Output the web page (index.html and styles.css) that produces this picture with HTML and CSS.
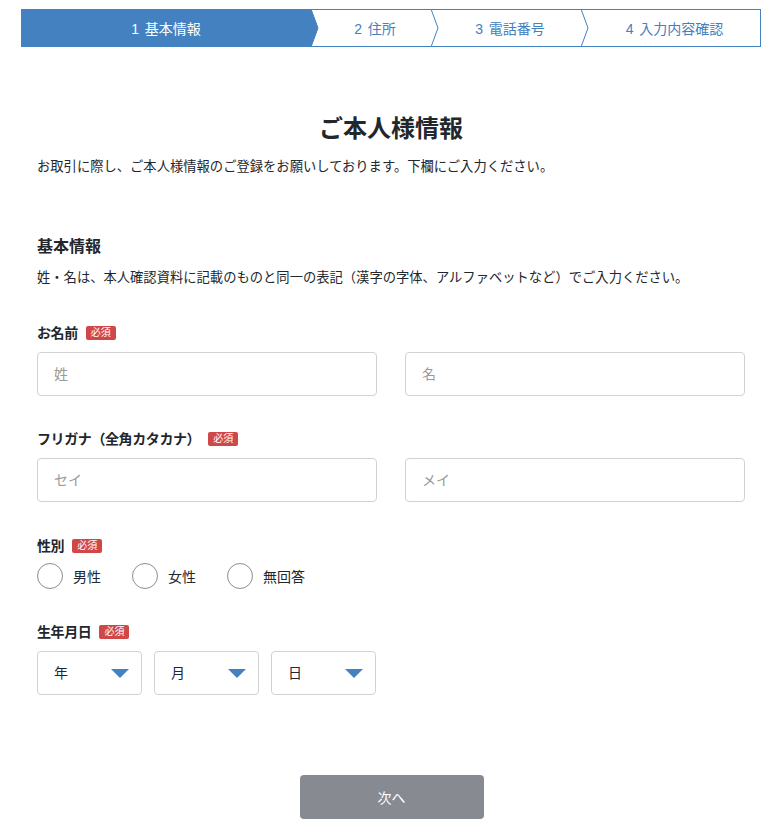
FILE: index.html
```html
<!DOCTYPE html>
<html lang="ja">
<head>
  <meta charset="UTF-8">
  <meta name="viewport" content="width=device-width, initial-scale=1.0">
  <title>ご本人様情報</title>
  <link rel="stylesheet" href="styles.css">
</head>
<body>
  <ol class="steps">
    <li class="step step-1 active">1 基本情報
      <svg class="chev" width="8" height="38" viewBox="0 0 8 38"><polygon points="0,0 7,19 0,38" fill="#4381c1"/><polyline points="0,0 7,19 0,38" fill="none" stroke="#4381c1" stroke-width="1"/></svg>
    </li>
    <li class="step step-2">2 住所
      <svg class="chev" width="8" height="38" viewBox="0 0 8 38"><polygon points="0,0 7,19 0,38" fill="#fff"/><polyline points="0,0 7,19 0,38" fill="none" stroke="#4381c1" stroke-width="1"/></svg>
    </li>
    <li class="step step-3">3 電話番号
      <svg class="chev" width="8" height="38" viewBox="0 0 8 38"><polygon points="0,0 7,19 0,38" fill="#fff"/><polyline points="0,0 7,19 0,38" fill="none" stroke="#4381c1" stroke-width="1"/></svg>
    </li>
    <li class="step step-4">4 入力内容確認</li>
  </ol>

  <form class="form">
    <h1 class="title">ご本人様情報</h1>
    <p class="lead">お取引に際し、ご本人様情報のご登録をお願いしております。下欄にご入力ください。</p>

    <h2 class="section">基本情報</h2>
    <p class="lead">姓・名は、本人確認資料に記載のものと同一の表記（漢字の字体、アルファベットなど）でご入力ください。</p>

    <div class="field">
      <label class="label">お名前 <span class="req">必須</span></label>
      <div class="pair">
        <input type="text" class="text" placeholder="姓">
        <input type="text" class="text" placeholder="名">
      </div>
    </div>

    <div class="field">
      <label class="label">フリガナ（全角カタカナ） <span class="req">必須</span></label>
      <div class="pair">
        <input type="text" class="text" placeholder="セイ">
        <input type="text" class="text" placeholder="メイ">
      </div>
    </div>

    <div class="field field-radio">
      <label class="label">性別 <span class="req">必須</span></label>
      <div class="radios">
        <label class="radio"><input type="radio" name="sex"><span class="dot"></span>男性</label>
        <label class="radio"><input type="radio" name="sex"><span class="dot"></span>女性</label>
        <label class="radio"><input type="radio" name="sex"><span class="dot"></span>無回答</label>
      </div>
    </div>

    <div class="field field-date">
      <label class="label">生年月日 <span class="req">必須</span></label>
      <div class="dates">
        <div class="sel">
          <select><option>年</option></select>
          <svg class="tri" width="18" height="9" viewBox="0 0 18 9"><polygon points="0,0 18,0 9,9" fill="#4381c1"/></svg>
        </div>
        <div class="sel">
          <select><option>月</option></select>
          <svg class="tri" width="18" height="9" viewBox="0 0 18 9"><polygon points="0,0 18,0 9,9" fill="#4381c1"/></svg>
        </div>
        <div class="sel">
          <select><option>日</option></select>
          <svg class="tri" width="18" height="9" viewBox="0 0 18 9"><polygon points="0,0 18,0 9,9" fill="#4381c1"/></svg>
        </div>
      </div>
    </div>

    <div class="actions">
      <button type="button" class="next">次へ</button>
    </div>
  </form>
</body>
</html>
```

FILE: styles.css
```css
* { box-sizing: border-box; }
body {
  margin: 0;
  background: #fff;
  color: #22272d;
  font-family: "Liberation Sans", "Noto Sans CJK JP", sans-serif;
  font-size: 14px;
}

.steps {
  display: flex;
  list-style: none;
  margin: 9px 20px 0 21px;
  padding: 0;
  height: 38px;
  border: 1px solid #4381c1;
}
.step {
  position: relative;
  display: flex;
  align-items: center;
  justify-content: center;
  padding-left: 8px;
  color: #4381c1;
  font-size: 14px;
  word-spacing: 2px;
}
.step-1 { width: 290px; padding-left: 0; }
.step-2 { width: 120px; }
.step-3 { width: 150px; }
.step-4 { flex: 1; }
.step.active { background: #4381c1; color: #fff; margin: -1px 0 -1px -1px; }
.chev { position: absolute; right: -8px; top: -1px; z-index: 1; }
.step.active .chev { top: 0; }

.form { padding: 0 36px 0 37px; }
.title {
  margin: 66px 0 0;
  text-align: center;
  font-size: 24px;
  font-weight: bold;
  line-height: 32px;
}
.lead { margin: 12px 0 0; line-height: 20px; font-size: 13.3px; }
.section {
  margin: 59px 0 0;
  font-size: 16px;
  font-weight: bold;
  line-height: 22px;
}
.section + .lead { margin-top: 10px; }

.field { margin-top: 35px; }
.field + .field { margin-top: 33px; }
.field-radio { margin-top: 34px !important; }
.field-date { margin-top: 33px !important; }
.label {
  display: flex;
  align-items: center;
  gap: 8px;
  font-weight: bold;
  font-size: 14px;
  line-height: 20px;
  letter-spacing: -0.4px;
}
.req {
  display: inline-block;
  background: #d0474a;
  color: #fff;
  font-size: 10px;
  font-weight: normal;
  line-height: 14px;
  padding: 0 5px;
  border-radius: 2px;
  letter-spacing: 0;
}
.pair {
  display: grid;
  grid-template-columns: 1fr 1fr;
  gap: 28px;
  margin-top: 9px;
}
.text {
  height: 44px;
  padding: 0 16px;
  border: 1px solid #d2d2d2;
  border-radius: 4px;
  font: inherit;
  font-size: 14px;
  color: #22272d;
}
.text::placeholder { color: #9a9a9a; }

.radios { display: flex; gap: 31px; margin-top: 7px; }
.radio { display: flex; align-items: center; gap: 10px; font-size: 14px; letter-spacing: 0; font-weight: normal; }
.radio input { display: none; }
.dot {
  width: 26px;
  height: 26px;
  border: 1px solid #8a8d91;
  border-radius: 50%;
}

.dates {
  display: flex;
  gap: 12px;
  margin-top: 9px;
}
.sel { position: relative; width: 105px; }
.sel select {
  appearance: none;
  -webkit-appearance: none;
  width: 100%;
  height: 44px;
  padding: 0 16px;
  border: 1px solid #d2d2d2;
  border-radius: 4px;
  background: #fff;
  font: inherit;
  font-size: 14px;
  color: #22272d;
}
.tri { position: absolute; right: 13px; top: 18px; pointer-events: none; }

.actions { display: flex; justify-content: center; margin-top: 80px; }
.next {
  width: 184px;
  height: 44px;
  border: none;
  border-radius: 4px;
  background: #878b91;
  color: #fff;
  font: inherit;
  font-size: 14px;
  margin-left: 1px;
}
```
